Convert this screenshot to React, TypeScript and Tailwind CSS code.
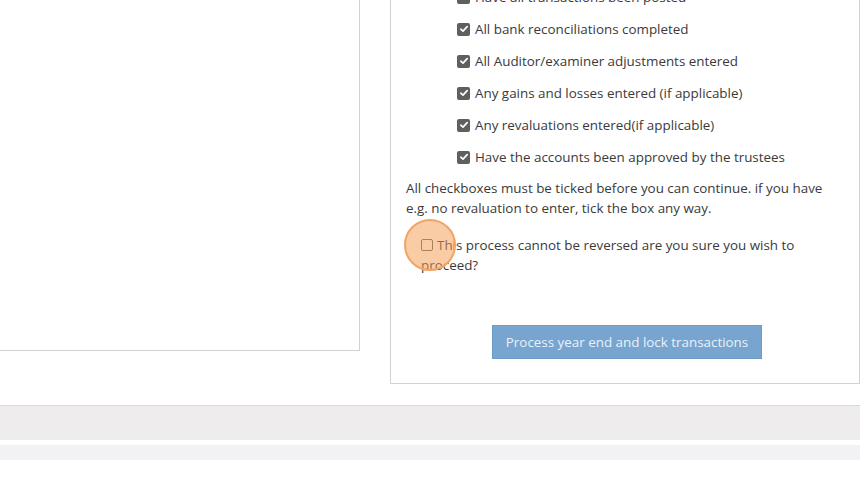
const items = [
  'Have all transactions been posted',
  'All bank reconciliations completed',
  'All Auditor/examiner adjustments entered',
  'Any gains and losses entered (if applicable)',
  'Any revaluations entered(if applicable)',
  'Have the accounts been approved by the trustees',
];

function CheckedBox() {
  return (
    <span className="mr-[5px] inline-flex h-[13px] w-[13px] shrink-0 items-center justify-center rounded-[2px] bg-[#5f5f5f]">
      <svg viewBox="0 0 12 12" className="h-[10px] w-[10px]">
        <path d="M2.2 6.2 L4.8 8.6 L9.8 3.2" fill="none" stroke="#fff" strokeWidth="2" strokeLinecap="round" strokeLinejoin="round" />
      </svg>
    </span>
  );
}

export default function App() {
  return (
    <div
      className="min-h-[481px] overflow-hidden bg-white text-[13.4px] text-[#3a3a3a]"
      style={{ fontFamily: '"Open Sans", "Liberation Sans", sans-serif' }}
    >
      <div className="-mt-[19px] flex items-start gap-[30px]">
        {/* left panel */}
        <div className="h-[370px] w-[360px] border-r border-b border-[#d2d2d2] bg-white" />

        {/* right panel */}
        <div className="w-[470px] border-r border-b border-l border-[#d2d2d2] bg-white pb-[24px]">
          <ul className="pl-[66px]">
            {items.map((t) => (
              <li key={t} className="flex h-[32px] items-center leading-[20px]">
                <CheckedBox />
                <span>{t}</span>
              </li>
            ))}
          </ul>
          <p className="mt-[5px] px-[15px] leading-[20px]">
            All checkboxes must be ticked before you can continue. if you have e.g. no revaluation to enter, tick the box any way.
          </p>
          <div className="relative mt-[17px] pl-[30px] pr-[40px] leading-[20px]">
            <span className="relative mr-[4px] inline-block h-[12px] w-[12px] rounded-[2px] border border-[#666] bg-white align-[-1px]" />
            This process cannot be reversed are you sure you wish to proceed?
            <span className="pointer-events-none absolute left-[13px] top-[-16px] h-[52px] w-[52px] rounded-full border-2 border-[#f0a466] bg-[#f59a4d]/50" />
          </div>
          <div className="mt-[50px] flex justify-center pl-[4px]">
            <button className="h-[34px] w-[270px] border border-[#6d9cc8] bg-[#77a5d0] text-[13.4px] text-[#e9f1f9]">
              Process year end and lock transactions
            </button>
          </div>
        </div>
      </div>

      {/* footer bands */}
      <div className="mt-[21px] h-[35px] border-t border-[#d8d8d8] bg-[#eeeced]" />
      <div className="mt-[5px] h-[15px] bg-[#f2f2f4]" />
    </div>
  );
}
